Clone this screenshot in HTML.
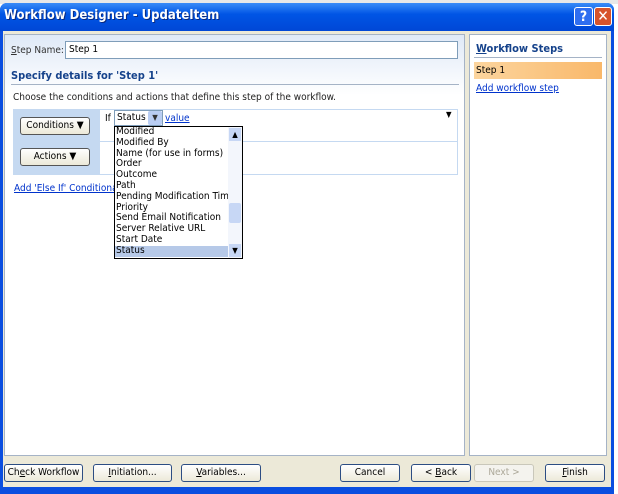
<html><head><style>
body{margin:0;width:618px;height:494px;background:#fff;position:relative;overflow:hidden;font-family:"DejaVu Sans Condensed","Liberation Sans",sans-serif;font-size:10px;}
.a{position:absolute;white-space:nowrap;}
.btn{position:absolute;height:18px;border:1px solid #2c4d83;border-radius:3px;background:linear-gradient(#fff,#ece9d8);text-align:center;line-height:16px;font-size:10px;color:#000;box-sizing:border-box;white-space:nowrap;}
.lnk{color:#0033cc;text-decoration:underline;}
</style></head><body>
<div class="a" style="left:0;top:0;width:618px;height:4px;background:#e8e8e8"></div>
<div class="a" style="left:0;top:3px;width:614px;height:491px;background:#0a4ee0;border-radius:7px 7px 0 0"></div>
<div class="a" style="left:0;top:3px;width:614px;height:28px;background:linear-gradient(#3a8cf8,#0055e5 40%,#0047d6);border-radius:7px 7px 0 0"></div>
<div class="a" style="left:4px;top:8px;color:#fff;font-weight:bold;font-size:13px;font-family:'DejaVu Sans Condensed',sans-serif;text-shadow:1px 1px #0a2a80">Workflow Designer - UpdateItem</div>
<div class="a" style="left:574px;top:7px;width:19px;height:19px;border:1px solid #fff;border-radius:3px;background:#2f6ef0;color:#fff;font-weight:bold;text-align:center;line-height:19px;font-size:14px;box-sizing:border-box">?</div>
<div class="a" style="left:594px;top:7px;width:18px;height:19px;border:1px solid #fff;border-radius:3px;background:#d7532b;color:#fff;font-weight:bold;text-align:center;line-height:17px;font-size:15px;box-sizing:border-box">✕</div>
<div class="a" style="left:3px;top:31px;width:608px;height:456px;background:#ece9d8"></div>
<div class="a" style="left:4px;top:34px;width:461px;height:422px;background:linear-gradient(#dfe9f7,#fff 60px);border:1px solid #a5b3c6;box-sizing:border-box"></div>
<div class="a" style="left:469px;top:34px;width:138px;height:422px;background:#fff;border:1px solid #a5b3c6;box-sizing:border-box"></div>
<div class="a" style="left:11px;top:45px;color:#333"><u>S</u>tep Name:</div>
<div class="a" style="left:65px;top:41px;width:393px;height:18px;border:1px solid #7f9db9;background:#fff;box-sizing:border-box;padding:2px 3px">Step 1</div>
<div class="a" style="left:11px;top:69px;color:#15428b;font-weight:bold;font-size:11px">Specify details for 'Step 1'</div>
<div class="a" style="left:11px;top:84px;width:448px;height:1px;background:#a5b3c6"></div>
<div class="a" style="left:13px;top:92px;color:#222">Choose the conditions and actions that define this step of the workflow.</div>
<div class="a" style="left:13px;top:109px;width:86px;height:66px;background:#c5d9f1"></div>
<div class="a" style="left:99px;top:109px;width:359px;height:66px;border:1px solid #c5d9f1;box-sizing:border-box;background:#fff"></div>
<div class="a" style="left:100px;top:141px;width:357px;height:1px;background:#c5d9f1"></div>
<div class="btn" style="left:20px;top:117px;width:70px;border-color:#555">Conditions ▼</div>
<div class="btn" style="left:20px;top:148px;width:70px;border-color:#555">Actions ▼</div>
<div class="a" style="left:105px;top:113px">If</div>
<div class="a" style="left:114px;top:110px;width:49px;height:16px;border:1px solid #7f9db9;background:#fff;box-sizing:border-box;padding:1px 2px">Status</div>
<div class="a" style="left:148px;top:111px;width:14px;height:14px;background:#b9cdf3;border-radius:2px;color:#333;text-align:center;line-height:14px;font-size:8px">▼</div>
<div class="a lnk" style="left:165px;top:113px">value</div>
<div class="a" style="left:446px;top:110px;font-size:8px">▼</div>
<div class="a lnk" style="left:14px;top:183px">Add 'Else If' Conditional B</div>
<div class="a" style="left:114px;top:126px;width:129px;height:133px;border:1px solid #000;background:#fff;box-sizing:border-box;line-height:10.8px;overflow:hidden">
<div style="padding-left:1px">Modified<br>Modified By<br>Name (for use in forms)<br>Order<br>Outcome<br>Path<br>Pending Modification Time<br>Priority<br>Send Email Notification<br>Server Relative URL<br>Start Date</div>
<div style="background:#b6c9e8;width:113px;padding-left:1px">Status</div>
<div class="a" style="right:0;top:0;width:14px;height:131px;background:#f3f6fc"></div>
<div class="a" style="right:1px;top:1px;width:12px;height:13px;background:#c7d7f5;font-size:8px;text-align:center;line-height:13px">▲</div>
<div class="a" style="right:1px;top:76px;width:12px;height:20px;background:#c7d7f5;border-radius:2px"></div>
<div class="a" style="right:1px;top:117px;width:12px;height:13px;background:#c7d7f5;font-size:8px;text-align:center;line-height:13px">▼</div>
</div>
<div class="a" style="left:476px;top:42px;color:#15428b;font-weight:bold;font-size:11px"><u>W</u>orkflow Steps</div>
<div class="a" style="left:474px;top:57px;width:128px;height:1px;background:#a5b3c6"></div>
<div class="a" style="left:474px;top:62px;width:128px;height:17px;background:linear-gradient(90deg,#fcd59e,#f9b86a);padding:3px 2px;box-sizing:border-box">Step 1</div>
<div class="a lnk" style="left:476px;top:83px">Add workflow step</div>
<div class="btn" style="left:4px;top:464px;width:79px">Ch<u>e</u>ck Workflow</div>
<div class="btn" style="left:93px;top:464px;width:79px"><u>I</u>nitiation...</div>
<div class="btn" style="left:181px;top:464px;width:80px"><u>V</u>ariables...</div>
<div class="btn" style="left:340px;top:464px;width:60px">Cancel</div>
<div class="btn" style="left:411px;top:464px;width:60px">&lt; <u>B</u>ack</div>
<div class="btn" style="left:474px;top:464px;width:60px;border-color:#c9c7ba;color:#aca899;background:#f4f3ee">Next &gt;</div>
<div class="btn" style="left:545px;top:464px;width:60px"><u>F</u>inish</div>
</body></html>
